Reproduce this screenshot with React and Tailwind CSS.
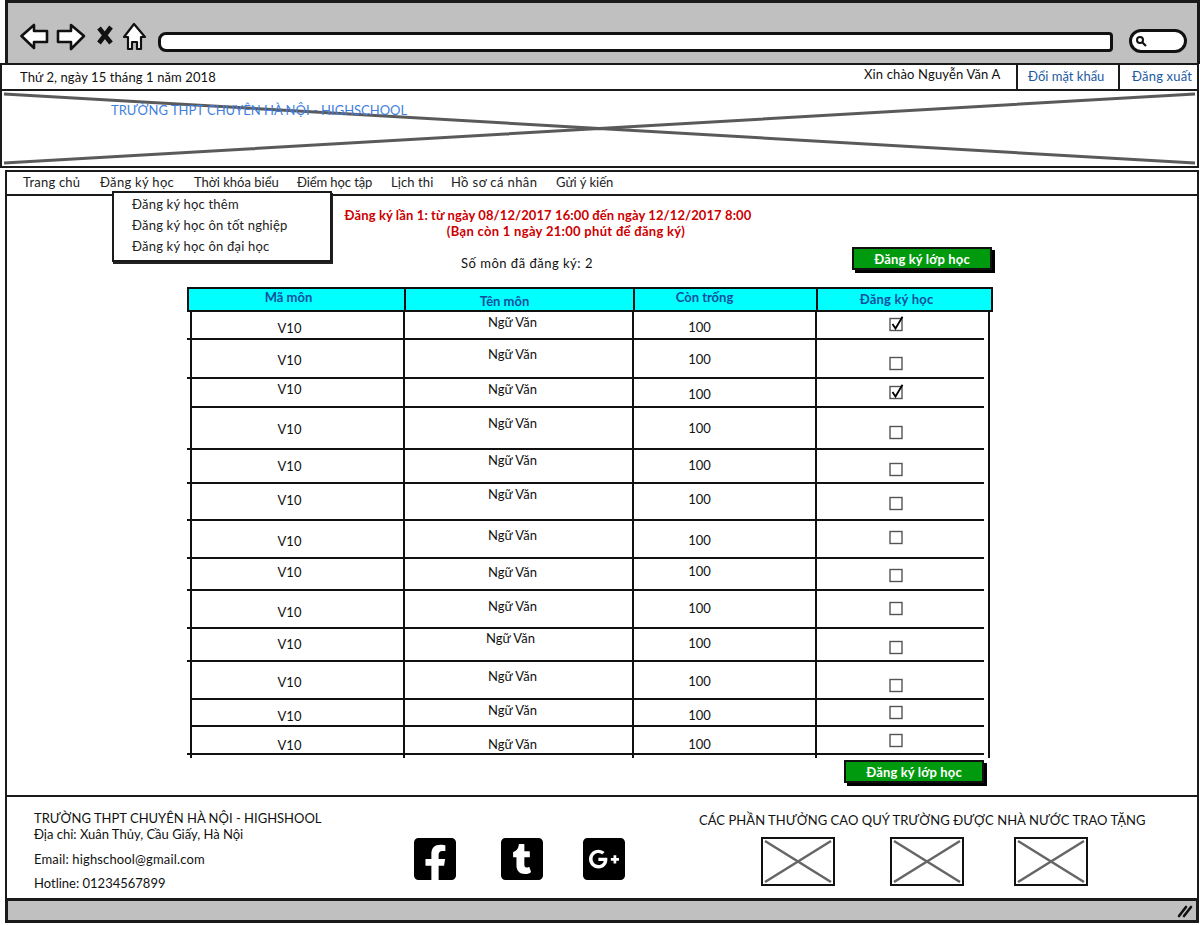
import React from "react";
import { FaFacebookSquare, FaTumblrSquare, FaGooglePlusSquare } from "react-icons/fa";

const rows = [
  { h: "h-[28px]", a: "pt-[9px]", b: "pt-[3px]", c: "pt-[8px]", d: "pt-[6px]", on: true },
  { h: "h-[39px]", a: "pt-[13px]", b: "pt-[7px]", c: "pt-[12px]", d: "pt-[17px]" },
  { h: "h-[29px]", a: "pt-[3px]", b: "pt-[3px]", c: "pt-[8px]", d: "pt-[7px]", on: true, short: true },
  { h: "h-[42px]", a: "pt-[14px]", b: "pt-[8px]", c: "pt-[13px]", d: "pt-[18px]" },
  { h: "h-[34px]", a: "pt-[9px]", b: "pt-[3px]", c: "pt-[8px]", d: "pt-[13px]" },
  { h: "h-[37px]", a: "pt-[9px]", b: "pt-[3px]", c: "pt-[8px]", d: "pt-[13px]" },
  { h: "h-[38px]", a: "pt-[13px]", b: "pt-[7px]", c: "pt-[12px]", d: "pt-[10px]" },
  { h: "h-[32px]", a: "pt-[6px]", b: "pt-[6px]", c: "pt-[5px]", d: "pt-[10px]" },
  { h: "h-[38px]", a: "pt-[14px]", b: "pt-[8px]", c: "pt-[10px]", d: "pt-[11px]" },
  { h: "h-[33px]", a: "pt-[8px]", b: "pt-[2px]", c: "pt-[7px]", d: "pt-[12px]", left: true },
  { h: "h-[38px]", a: "pt-[13px]", b: "pt-[7px]", c: "pt-[12px]", d: "pt-[17px]", short: true },
  { h: "h-[27px]", a: "pt-[9px]", b: "pt-[3px]", c: "pt-[8px]", d: "pt-[6px]", short: true },
  { h: "h-[27px]", a: "pt-[11px]", b: "pt-[10px]", c: "pt-[10px]", d: "pt-[7px]" },
];

const bodyCols = "grid grid-cols-[3px_215px_229px_183px_167px]";

function Check({ on }) {
  return (
    <svg width="16" height="16" viewBox="0 0 16 16" className="block">
      <rect x="1" y="2.5" width="12" height="12" fill="#fff" stroke="#555" strokeWidth="1.4" />
      {on && <path d="M3.5 8 L6.5 12.5 L13.5 0.8" fill="none" stroke="#000" strokeWidth="1.8" />}
    </svg>
  );
}

function Placeholder() {
  return (
    <div className="relative w-[74px] h-[49px] border-2 border-[#111] bg-white">
      <svg className="absolute inset-0 w-full h-full" viewBox="0 0 70 45" preserveAspectRatio="none">
        <path d="M2 2 L68 43 M68 2 L2 43" stroke="#666" strokeWidth="2.6" fill="none" />
      </svg>
    </div>
  );
}

function GreenButton() {
  return (
    <div className="flex items-center justify-center w-[140px] h-[23px] bg-[#009a0e] border-2 border-[#111] shadow-[3px_3px_0_#000] text-white font-bold text-[13px] tracking-[0.15px]">
      Đăng ký lớp học
    </div>
  );
}

export default function App() {
  return (
    <div className="relative w-[1201px] h-[925px] bg-white overflow-hidden text-[13px] leading-[16px] text-[#111] font-['Lato','Liberation_Sans',sans-serif]">
      {/* browser toolbar */}
      <div className="ml-[5px] w-[1195px] h-[64px] border-[3px] border-b-0 border-[#1a1a1a] bg-[#c0c0c0] flex items-start pt-[19px] pl-[12px]">
        <svg width="128" height="30" viewBox="0 0 128 30" className="shrink-0">
          <path d="M1.5 14 L14 3 L14 9 L27 9 L27 20 L14 20 L14 26 Z" fill="#fff" stroke="#111" strokeWidth="2.6" strokeLinejoin="round" />
          <path d="M38 9 L51 9 L51 3 L64 14 L51 27 L51 20 L38 20 Z" fill="#fff" stroke="#111" strokeWidth="2.6" strokeLinejoin="round" />
          <path d="M79 6 L91 21 M91 5 L79 21" stroke="#111" strokeWidth="4.6" fill="none" />
          <path d="M125 15 L114 2 L104 15 L108 15 L108 27 L112 27 L112 20 L117 20 L117 27 L121 27 L121 15 Z" fill="#fff" stroke="#111" strokeWidth="2.2" strokeLinejoin="round" />
        </svg>
        <div className="ml-[10px] mt-[10px] w-[955px] h-[20px] bg-white border-[3px] border-[#111] rounded-l-lg rounded-r-[4px] shrink-0" />
        <div className="relative ml-[16px] mt-[7px] w-[58px] h-[24px] bg-white border-[3px] border-[#111] rounded-full shrink-0">
          <svg width="12" height="12" viewBox="0 0 12 12" className="absolute left-[3px] top-[3px]">
            <circle cx="5" cy="5" r="3" fill="none" stroke="#111" strokeWidth="2" />
            <path d="M7.5 7.5 L11 11" stroke="#111" strokeWidth="2.2" />
          </svg>
        </div>
      </div>

      {/* top info bar */}
      <div className="w-[1199px] h-[28px] border-2 border-[#1a1a1a] bg-white flex items-stretch -mt-[1px]">
        <div className="pl-[18px] pt-[4px] grow tracking-[0.1px]">Thứ 2, ngày 15 tháng 1 năm 2018</div>
        <div className="w-[152px] pt-[1px] tracking-[0.15px]">Xin chào Nguyễn Văn A</div>
        <div className="w-[102px] border-l-2 border-[#1a1a1a] pl-[10px] pt-[3px] text-[#1c5aa0]">Đổi mặt khẩu</div>
        <div className="w-[79px] border-l-2 border-[#1a1a1a] pl-[12px] pt-[3px] text-[#1c5aa0] tracking-[0.2px]">Đăng xuất</div>
      </div>

      {/* banner */}
      <div className="relative w-[1199px] h-[77px] border-2 border-t-0 border-[#1a1a1a] bg-white pl-[109px] pt-[11px] text-[#3f7fe0]">
        <svg className="absolute inset-0 w-full h-full" viewBox="0 0 1195 75" preserveAspectRatio="none">
          <path d="M2 3 L1193 72 M1193 3 L2 72" stroke="#5a5a5a" strokeWidth="3" fill="none" />
        </svg>
        <span className="relative">TRƯỜNG THPT CHUYÊN HÀ NỘI - HIGHSCHOOL</span>
      </div>

      {/* nav */}
      <div className="ml-[5px] mt-[2px] w-[1194px] h-[26px] border-2 border-[#1a1a1a] bg-white flex items-center pl-[16px] pb-[2px] text-[#222] tracking-[0.2px]">
        <div className="w-[77px]">Trang chủ</div>
        <div className="w-[94px] tracking-[0.3px]">Đăng ký học</div>
        <div className="w-[103px] tracking-[0px]">Thời khóa biểu</div>
        <div className="w-[94px] tracking-[-0.1px]">Điểm học tập</div>
        <div className="w-[60px] tracking-[0.1px]">Lịch thi</div>
        <div className="w-[105px] tracking-[0.4px]">Hồ sơ cá nhân</div>
        <div className="tracking-[0px]">Gửi ý kiến</div>
      </div>

      {/* dropdown */}
      <div className="absolute left-[112px] top-[191px] z-10 w-[220px] h-[71px] bg-white border-2 border-[#1a1a1a] shadow-[1px_2px_0_#222] pl-[18px] pt-[3px] flex flex-col gap-[5px] text-[#222] tracking-[0.2px]">
        <div>Đăng ký học thêm</div>
        <div>Đăng ký học ôn tốt nghiệp</div>
        <div>Đăng ký học ôn đại học</div>
      </div>

      {/* main */}
      <div className="ml-[5px] w-[1194px] h-[599px] border-l-2 border-r-2 border-[#1a1a1a] bg-white pt-[11px] pl-[1px]">
        <div className="ml-[190px] w-[700px] text-center font-bold text-[#cc0000]">
          <div className="tracking-[0.1px]">Đăng ký lần 1: từ ngày 08/12/2017 16:00 đến ngày 12/12/2017 8:00</div>
          <div className="pl-[36px] tracking-[0.3px]">(Bạn còn 1 ngày 21:00 phút để đăng ký)</div>
        </div>
        <div className="mt-[8px] ml-[453px] flex">
          <div className="w-[391px] pt-[8px] tracking-[0.5px]">Số môn đã đăng ký: 2</div>
          <GreenButton />
        </div>

        {/* table */}
        <div className="mt-[16px] ml-[179px] w-[806px]">
          <div className="grid grid-cols-[217px_229px_183px_173px] h-[25px] border-2 border-[#111] bg-[#00ffff] text-[#124f9c] font-bold text-center">
            <div className="border-r-2 border-[#111] pr-[16px]">Mã môn</div>
            <div className="border-r-2 border-[#111] pt-[4px] pr-[30px]">Tên môn</div>
            <div className="border-r-2 border-[#111] pr-[42px]">Còn trống</div>
            <div className="pt-[2px] pr-[16px] tracking-[0.2px]">Đăng ký học</div>
          </div>
          <div className="w-[803px] border-r-2 border-[#111]">
            {rows.map((r, i) => (
              <div key={i} className={`${bodyCols} ${r.h}`}>
                <div className={r.short ? "" : "border-b-2 border-[#111]"} />
                <div className="border-l-2 border-b-2 border-r-2 border-[#111] text-center pr-[16px]">
                  <div className={`-mt-[1px] ${r.a}`}>V10</div>
                </div>
                <div className="border-b-2 border-r-2 border-[#111] text-center pr-[12px]">
                  <div className={`-mt-[1px] ${r.b} ${r.left ? "pr-[4px]" : ""}`}>Ngữ Văn</div>
                </div>
                <div className="border-b-2 border-r-2 border-[#111] text-center pr-[50px]">
                  <div className={`-mt-[1px] ${r.c}`}>100</div>
                </div>
                <div className="border-b-2 border-[#111] flex justify-center pr-[8px]">
                  <div className={`-mt-[2px] ${r.d}`}><Check on={r.on} /></div>
                </div>
              </div>
            ))}
            <div className={`${bodyCols} h-[4px]`}>
              <div />
              <div className="border-l-2 border-r-2 border-[#111]" />
              <div className="border-r-2 border-[#111]" />
              <div className="border-r-2 border-[#111]" />
              <div />
            </div>
          </div>
        </div>
        <div className="mt-[2px] ml-[836px]">
          <GreenButton />
        </div>
      </div>

      {/* footer */}
      <div className="ml-[5px] w-[1194px] h-[103px] border-[2px] border-b-0 border-[#1a1a1a] bg-white flex">
        <div className="w-[401px] pl-[27px] pt-[13px] shrink-0">
          <div>TRƯỜNG THPT CHUYÊN HÀ NỘI - HIGHSHOOL</div>
          <div>Địa chỉ: Xuân Thủy, Cầu Giấy, Hà Nội</div>
          <div className="mt-[9px] tracking-[0.15px]">Email: highschool@gmail.com</div>
          <div className="mt-[8px]">Hotline: 01234567899</div>
        </div>
        <div className="w-[280px] shrink-0 flex pl-[3px] pt-[38px] text-black">
          <FaFacebookSquare size={48} />
          <FaTumblrSquare size={48} className="ml-[39px]" />
          <FaGooglePlusSquare size={48} className="ml-[34px]" />
        </div>
        <div className="grow pt-[15px]">
          <div className="pl-[11px] whitespace-nowrap tracking-[0.05px]">CÁC PHẦN THƯỞNG CAO QUÝ TRƯỜNG ĐƯỢC NHÀ NƯỚC TRAO TẶNG</div>
          <div className="flex mt-[9px] pl-[73px]">
            <Placeholder />
            <div className="ml-[55px]"><Placeholder /></div>
            <div className="ml-[50px]"><Placeholder /></div>
          </div>
        </div>
      </div>

      {/* status bar */}
      <div className="ml-[5px] w-[1194px] h-[25px] border-[3px] border-[#1a1a1a] bg-[#c0c0c0] flex justify-end items-center pr-[3px]">
        <svg width="16" height="14" viewBox="0 0 16 14">
          <path d="M2 12 L9 3 M7 12 L14 3" stroke="#111" strokeWidth="2.6" strokeLinecap="round" fill="none" />
        </svg>
      </div>
    </div>
  );
}
